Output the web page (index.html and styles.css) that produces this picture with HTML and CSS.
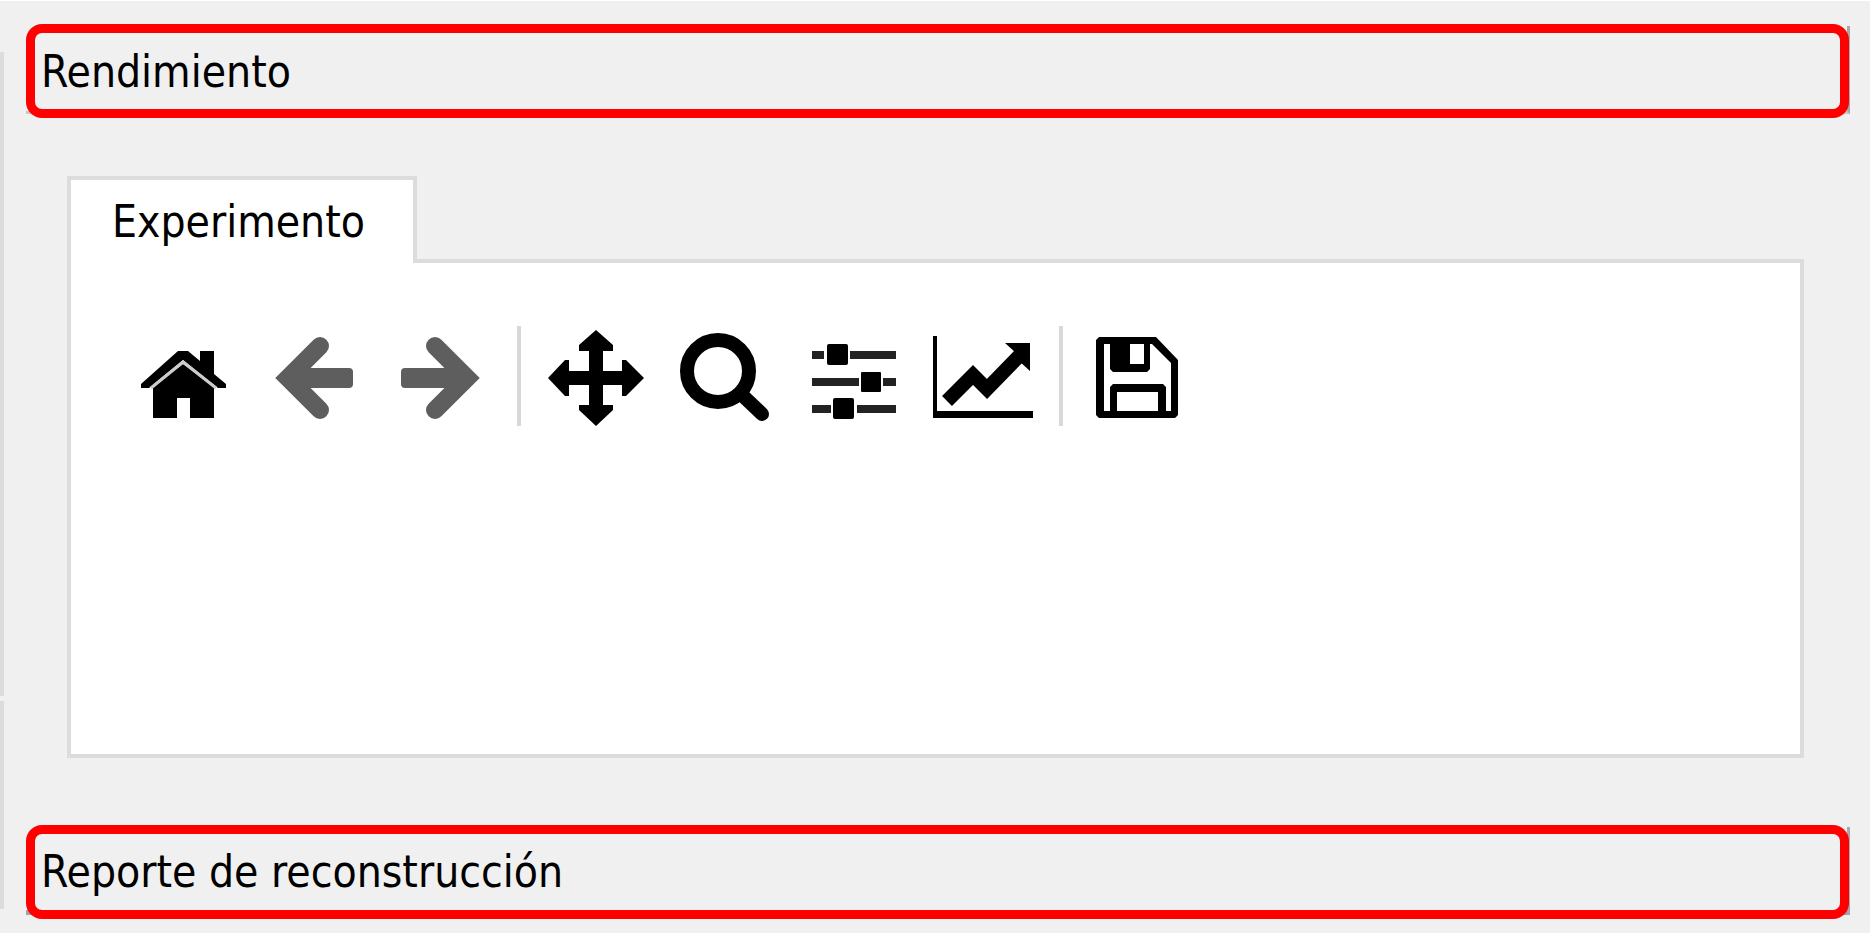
FILE: index.html
```html
<!DOCTYPE html>
<html lang="es">
<head>
<meta charset="utf-8">
<title>Rendimiento</title>
<link rel="stylesheet" href="styles.css">
</head>
<body>
<div class="window">
  <div class="edge">
    <div class="edge-upper"></div>
    <div class="edge-lower"></div>
  </div>
  <main class="content">
    <h2 class="bar">Rendimiento</h2>
    <section class="tabs">
      <div role="tablist">
        <button class="tab" id="tab-exp" role="tab" aria-selected="true" aria-controls="panel-exp">Experimento</button>
      </div>
      <div class="panel" id="panel-exp" role="tabpanel" aria-labelledby="tab-exp">
        <div class="toolbar" role="toolbar" aria-label="Gráfico">
          <button class="tool" aria-label="Inicio">
            <svg class="icon" viewBox="0 0 124 100"><path d="M21 58 58 25H68L80 35V25H94V48L106 58V62H98L63 34 29 62H21Z"/><path d="M33 61 63 38 94 61V92H70V72H57V92H33Z"/><path class="seam" d="M31 62 63 36 96 62"/></svg>
          </button>
          <button class="tool" aria-label="Atrás" disabled>
            <svg class="icon dim" viewBox="0 0 124 100"><path class="chevron" d="M72 20 40 52 72 84"/><rect x="40" y="42" width="65" height="20" rx="4"/></svg>
          </button>
          <button class="tool" aria-label="Adelante" disabled>
            <svg class="icon dim" viewBox="0 0 124 100"><path class="chevron" d="M59 20 91 52 59 84"/><rect x="25" y="42" width="65" height="20" rx="4"/></svg>
          </button>
          <span class="separator"></span>
          <button class="tool" aria-label="Desplazar">
            <svg class="icon" viewBox="0 0 124 100"><path d="M62 4 79 19V25H69V45H88V34H92L110 52 92 70H88V59H69V79H79V84L62 100 45 84V79H55V59H35V70H31L14 52 31 34H35V45H55V25H45V19Z"/></svg>
          </button>
          <button class="tool" aria-label="Ampliar">
            <svg class="icon" viewBox="0 0 124 100"><circle class="line" cx="56" cy="45" r="31" stroke-width="14"/><path class="line" stroke-width="14" stroke-linecap="round" d="M79 68 100 88"/></svg>
          </button>
          <button class="tool" aria-label="Configurar márgenes">
            <svg class="icon" viewBox="0 0 124 100"><path class="rail" d="M22 29H34M60 29H106M22 56H69M93 56H106M22 83H41M67 83H106"/><rect x="37" y="18" width="21" height="21" rx="2"/><rect x="71" y="46" width="20" height="20" rx="1"/><rect x="43" y="72" width="21" height="21" rx="2"/></svg>
          </button>
          <button class="tool" aria-label="Editar ejes">
            <svg class="icon" viewBox="0 0 124 100"><path d="M15 10H19V85H115V92H15Z"/><path class="line" stroke-width="14" d="M29 75 55 49 69 63 103 28"/><path d="M87 17H112V45L101 35 98 27Z"/></svg>
          </button>
          <span class="separator"></span>
          <button class="tool" aria-label="Guardar">
            <svg class="icon" viewBox="0 0 124 100"><path fill-rule="evenodd" d="M23 11H80L102 34V89L99 92H23L20 89V14ZM28 18V85H34V61L37 58H87L90 61V85H95V37L76 18H74V43L71 46H37L34 43V18ZM54 18V38H68V18ZM41 66V85H82V66Z"/></svg>
          </button>
        </div>
      </div>
    </section>
    <h2 class="bar bar-deep">Reporte de reconstrucción</h2>
  </main>
</div>
</body>
</html>
```
FILE: styles.css
```css
* {
  box-sizing: border-box;
}

body {
  margin: 0;
  background: #f0f0f0;
  color: #000;
  font-family: "DejaVu Sans Condensed", "DejaVu Sans", sans-serif;
  font-size: 44px;
}

.window {
  display: grid;
  grid-template-columns: 4px 1fr;
  min-height: 100vh;
  border-top: 1px solid #fff;
  border-bottom: 1px solid #fff;
}

.edge {
  display: flex;
  flex-direction: column;
  gap: 5px;
  padding: 51px 0 24px;
}

.edge-upper,
.edge-lower {
  background: #dcdcdc;
}

.edge-upper {
  flex: 644;
}

.edge-lower {
  flex: 208;
}

.content {
  display: flex;
  flex-direction: column;
  padding: 25px 20px 0 22px;
}

/* Section title with a bevelled edge under a red frame */
.bar {
  position: relative;
  display: flex;
  align-items: center;
  height: 88px;
  margin: 0;
  padding: 6px 14px 0 15px;
  border-right: 3px solid #a8a8a8;
  border-bottom: 3px solid #c8c8c8;
  font-size: inherit;
  font-weight: normal;
}

.bar::after {
  content: "";
  position: absolute;
  inset: -2px -2px -7px 0;
  border: 9px solid #f00;
  border-radius: 16px;
}

.bar-deep {
  border-bottom: 5px solid #a0a4a8;
}

.bar-deep::after {
  bottom: -9px;
}

.tabs {
  display: flex;
  flex-direction: column;
  margin: 62px 46px 69px 41px;
}

.tab {
  position: relative;
  display: block;
  height: 87px;
  margin: 0 0 -4px;
  padding: 0 48px 0 41px;
  border: 4px solid #dcdcdc;
  border-bottom: 0;
  background: #fff;
  color: inherit;
  font: inherit;
}

.panel {
  min-height: 499px;
  padding: 63px 49px;
  border: 4px solid #dcdcdc;
  background: #fff;
}

.toolbar {
  display: flex;
  gap: 4px;
}

.tool {
  flex: none;
  width: 124px;
  height: 100px;
  padding: 0;
  border: 0;
  background: none;
}

.separator {
  width: 4px;
  margin: 0 9px 0 13px;
  background: #d8d8d8;
}

.icon {
  display: block;
  width: 124px;
  height: 100px;
  fill: #000;
}

.dim {
  fill: #5e5e5e;
}

.chevron {
  fill: none;
  stroke: #5e5e5e;
  stroke-width: 18px;
  stroke-linecap: round;
}

.line {
  fill: none;
  stroke: #000;
}

.rail {
  fill: none;
  stroke: #222;
  stroke-width: 8px;
}

.seam {
  fill: none;
  stroke: #ccc;
  stroke-width: 3px;
}
```
